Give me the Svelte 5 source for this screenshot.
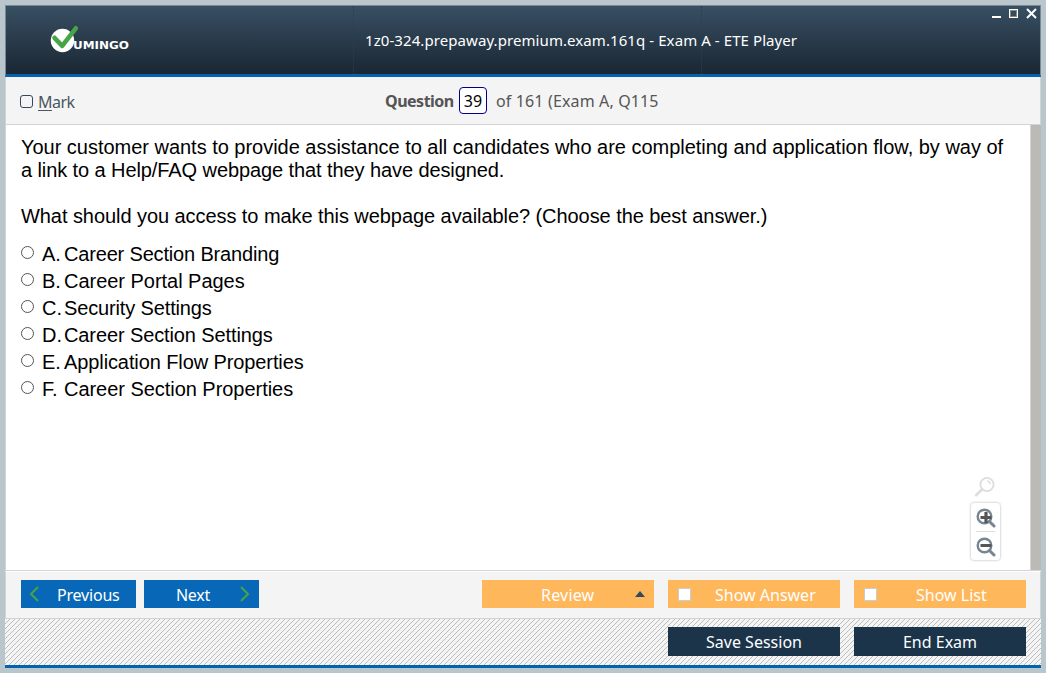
<script>
  const options = [
    { letter: 'A.', text: 'Career Section Branding', tracking: -0.17 },
    { letter: 'B.', text: 'Career Portal Pages', tracking: -0.03 },
    { letter: 'C.', text: 'Security Settings', tracking: -0.14 },
    { letter: 'D.', text: 'Career Section Settings', tracking: -0.11 },
    { letter: 'E.', text: 'Application Flow Properties', tracking: -0.1 },
    { letter: 'F.', text: 'Career Section Properties', tracking: -0.04 }
  ];
</script>

<div class="desktop">
  <div class="window">
    <header>
      <svg class="logo" width="84" height="30" viewBox="0 0 84 30">
        <circle cx="12.5" cy="15.5" r="11.7" fill="#fff" />
        <path d="M4.5 12.8 12.2 20.8 25.8 3.3" fill="none" stroke="#46a546" stroke-width="4.6" stroke-linecap="round" stroke-linejoin="round" />
        <text x="23" y="24" textLength="56" lengthAdjust="spacingAndGlyphs">UMINGO</text>
      </svg>
      <div class="title"><span>1z0-324.prepaway.premium.exam.161q - Exam A - ETE Player</span></div>
      <svg class="controls" width="48" height="14" viewBox="0 0 48 14" fill="none">
        <path d="M2 11h9" stroke="#fff" stroke-width="2" />
        <rect x="19.5" y="3.5" width="8" height="8" stroke="#fff" />
        <rect x="20.5" y="4.5" width="6" height="6" stroke="#8b8780" />
        <path d="M37 3l9 9M46 3l-9 9" stroke="#fff" stroke-width="2" />
      </svg>
    </header>

    <div class="bar">
      <label class="mark"><i></i><span><u>M</u>ark</span></label>
      <div class="counter"><b>Question</b><span class="num">39</span><span class="of">of 161 (Exam A, Q115</span></div>
    </div>

    <div class="body">
      <main>
        <p class="l1">Your customer wants to provide assistance to all candidates who are completing and application flow, by way of</p>
        <p class="l2">a link to a Help/FAQ webpage that they have designed.</p>
        <p class="l3">What should you access to make this webpage available? (Choose the best answer.)</p>
        <ul>
          {#each options as { letter, text, tracking }}
            <li><i></i><span class="letter">{letter}</span><span style:letter-spacing="{tracking}px">{text}</span></li>
          {/each}
        </ul>
        <div class="zoom">
          <svg width="22" height="22" viewBox="0 0 22 22" fill="none" stroke="#dedede">
            <circle cx="13" cy="8.5" r="6.6" stroke-width="1.9" />
            <path d="M8 13.5 2.3 19" stroke-width="3" stroke-linecap="round" />
            <path d="M13 5q3 .5 3.3 3.2" stroke-width="1.3" />
          </svg>
          <div class="panel">
            <svg width="20" height="20" viewBox="0 0 20 20" fill="none">
              <circle cx="8.5" cy="8.5" r="6.8" stroke="#778590" stroke-width="2.4" />
              <path d="M13.5 13.5 18 18" stroke="#778590" stroke-width="3" stroke-linecap="round" />
              <path d="M4.5 9.5h11M10 4v11" stroke="#555" stroke-width="3.2" />
            </svg>
            <hr />
            <svg width="20" height="20" viewBox="0 0 20 20" fill="none">
              <circle cx="8.5" cy="8.5" r="6.8" stroke="#778590" stroke-width="2.4" />
              <path d="M13.5 13.5 18 18" stroke="#778590" stroke-width="3" stroke-linecap="round" />
              <path d="M4.5 8.5h11" stroke="#555" stroke-width="3" />
            </svg>
          </div>
        </div>
      </main>
      <div class="scroll"></div>
    </div>

    <div class="actions">
      <button class="nav prev">
        <svg width="12" height="18" viewBox="0 0 12 18"><path d="M10 2 3 9l7 7" /></svg>
        <span>Previous</span>
      </button>
      <button class="nav next">
        <span>Next</span>
        <svg width="12" height="18" viewBox="0 0 12 18"><path d="M2 2l7 7-7 7" /></svg>
      </button>
      <button class="orange review"><span>Review</span><svg width="10" height="6" viewBox="0 0 10 6"><path d="M0 6 5 0l5 6z" fill="#34495e" /></svg></button>
      <button class="orange"><i></i><span class="sa">Show Answer</span></button>
      <button class="orange"><i></i><span class="sl">Show List</span></button>
    </div>

    <footer>
      <svg class="hatch" width="1036" height="46">
        <defs>
          <pattern id="hatch" width="5" height="5" patternUnits="userSpaceOnUse">
            <path d="M4 0h1v1h-1zM3 1h1v1h-1zM2 2h1v1h-1zM1 3h1v1h-1zM0 4h1v1h-1z" fill="#bdbdbd" shape-rendering="crispEdges" />
          </pattern>
        </defs>
        <rect width="1036" height="46" fill="url(#hatch)" />
      </svg>
      <button>Save Session</button>
      <button>End Exam</button>
    </footer>
  </div>
</div>

<style>
  :global(body) { margin: 0; }
  .desktop { box-sizing: border-box; width: 1046px; height: 673px; padding: 5px; background: #b9c6cc; overflow: hidden; font-family: "Noto Sans", sans-serif; }
  .window { width: 1036px; height: 663px; display: flex; flex-direction: column; box-sizing: border-box; }
  header { box-sizing: border-box; height: 72px; flex: none; border: 1px solid #7b8a92; border-bottom: 3px solid #0463b1; background: linear-gradient(#384f63, #1a2733); display: flex; align-items: flex-start; }
  .logo { margin: 19px 0 0 44px; flex: none; }
  .logo text { font: bold 10px "DejaVu Sans", sans-serif; fill: #fff; }
  .title { box-sizing: border-box; height: 68px; width: 349px; margin-left: 219px; padding-left: 11px; border-left: 1px dotted #2c3c58; border-right: 1px dotted #2c3c58; color: #fff; font-size: 15px; line-height: 68px; white-space: nowrap; }
  .title span { letter-spacing: .08px; }
  .controls { margin: 0 2px 0 auto; }
  .bar { box-sizing: border-box; height: 48px; flex: none; background: #f4f4f4; border-bottom: 1px solid #d3d3d3; border-left: 1px solid #d3d3d3; border-right: 1px solid #d3d3d3; display: flex; align-items: center; color: #555; }
  .mark { display: flex; align-items: center; width: 379px; padding: 3px 0 0 14px; box-sizing: border-box; font-size: 16px; letter-spacing: -.5px; color: #4a5660; }
  .mark i { box-sizing: border-box; width: 13px; height: 13px; border: 1px solid #34495e; border-radius: 3px; margin: -2px 5px 0 0; }
  u { text-underline-offset: 2px; }
  .counter { display: flex; align-items: center; font-size: 16px; white-space: nowrap; }
  .counter b { width: 74px; letter-spacing: -.5px; }
  .num { box-sizing: border-box; width: 28px; height: 27px; border: 1px solid #00008b; border-radius: 4px; background: #fff; color: #000; text-align: center; line-height: 26px; }
  .of { margin-left: 9px; letter-spacing: .14px; }
  .body { height: 446px; flex: none; box-sizing: border-box; display: flex; border-bottom: 1px solid #d3d3d3; background: #fff; border-left: 1px solid #d3d3d3; }
  main { position: relative; width: 1025px; padding: 11px 0 0 15px; box-sizing: border-box; font: 20px/23px "Liberation Sans", Arial, sans-serif; color: #000; white-space: nowrap; border-right: 1px solid #d3d3d3; }
  p { margin: 0; }
  .l1 { letter-spacing: -.02px; }
  .l2 { letter-spacing: -.09px; }
  .l3 { margin-top: 23px; letter-spacing: -.065px; }
  ul { list-style: none; margin: 13px 0 0; padding: 0; }
  li { height: 27px; display: flex; align-items: center; }
  li i { box-sizing: border-box; width: 13px; height: 13px; border: 1px solid #555; border-radius: 50%; margin: -4px 8px 0 0; }
  .letter { width: 22px; }
  .scroll { width: 10px; background: #bbbab6; }
  .zoom { position: absolute; left: 964px; top: 351px; width: 31px; display: flex; flex-direction: column; align-items: center; }
  .zoom > svg { margin-left: -2px; }
  .panel { box-sizing: border-box; width: 31px; height: 59px; margin-top: 4px; border: 1px solid #e4e4e4; border-radius: 4px; box-shadow: 0 0 2px #ddd; display: flex; flex-direction: column; align-items: center; padding-top: 5px; }
  .panel svg { flex: none; }
  hr { width: 19px; height: 1px; border: 0; background: #ddd; margin: 3px 0 5px; }
  .actions { height: 48px; flex: none; box-sizing: border-box; background: #f4f4f4; border: 1px solid #d3d3d3; border-top: 1px solid #fff; display: flex; align-items: flex-start; padding: 8px 14px 0 15px; }
  button { flex: none; box-sizing: border-box; border: 0; padding: 0; height: 28px; color: #fff; font: 16px/30px "Noto Sans", sans-serif; display: flex; align-items: center; white-space: nowrap; }
  .actions span { padding-top: 2px; }
  .nav { width: 115px; background: #0867b6; }
  .nav path { fill: none; stroke: #46a546; stroke-width: 2; }
  .prev { padding-left: 7px; gap: 17px; letter-spacing: -.2px; }
  .next { margin-left: 8px; padding: 0 8px 0 32px; justify-content: space-between; letter-spacing: -.3px; }
  .orange { width: 172px; margin-left: 14px; background: #ffb75c; }
  .review { margin-left: auto; padding: 0 9px 0 59px; justify-content: space-between; letter-spacing: .2px; }
  .orange i { box-sizing: border-box; width: 13px; height: 13px; background: #fff; border: 1px solid #ccc; margin: 1px 0 0 10px; }
  .sa { margin-left: 24px; }
  .sl { margin-left: 39px; }
  footer { position: relative; height: 49px; flex: none; box-sizing: border-box; border-bottom: 3px solid #0463b1; background: #f4f4f4; display: flex; justify-content: flex-end; gap: 14px; padding: 8px 15px 0 0; }
  .hatch { position: absolute; left: 0; top: 0; }
  footer button { position: relative; width: 172px; height: 29px; background: #1b344a; justify-content: center; }
</style>
